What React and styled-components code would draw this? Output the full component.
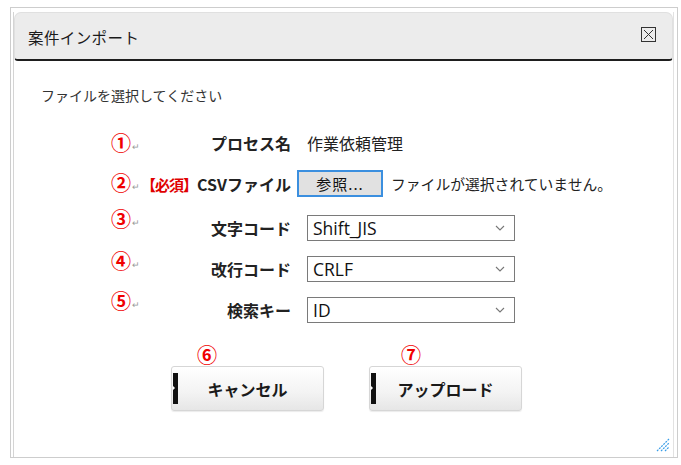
import React from "react";
import styled, { createGlobalStyle } from "styled-components";

const GlobalStyle = createGlobalStyle`
  body {
    margin: 0;
    background: #fff;
    font-family: "Noto Sans CJK JP", "Noto Sans", sans-serif;
    color: #222;
  }
`;

const Frame = styled.div`
  box-sizing: border-box;
  width: 668px;
  height: 451px;
  margin: 7px 0 0 10px;
  border: 1px solid #cdcdcd;
  padding: 4px 3px 0 2px;
  display: flex;
`;

const Panel = styled.div`
  position: relative;
  flex: 1;
  display: flex;
  flex-direction: column;
  border-left: 1px solid #d4d4d4;
  border-right: 1px solid #e2e2e2;
`;

const TitleBar = styled.div`
  height: 49px;
  display: flex;
  align-items: center;
  justify-content: space-between;
  padding: 2px 16px 0 13px;
  box-sizing: border-box;
  background: #ececec;
  border: 1px solid #e0e0e0;
  border-bottom: 2px solid #1e1e1e;
  border-radius: 7px 7px 4px 4px;
`;

const Title = styled.div`
  font-size: 15.5px;
  letter-spacing: 0.4px;
  color: #1a1a1a;
`;

const CloseBox = styled.div`
  width: 13px;
  height: 13px;
  border: 1px solid #333;
  display: flex;
  align-items: center;
  justify-content: center;
  margin-top: -6px;
`;

const Body = styled.div`
  flex: 1;
  padding: 24px 0 0 27px;
`;

const Intro = styled.div`
  font-size: 14px;
  line-height: 20px;
  color: #333;
`;

const Form = styled.div`
  display: flex;
  flex-direction: column;
  margin-left: 71px;
`;

const Row = styled.div`
  display: grid;
  grid-template-columns: 24px 171px auto;
  align-items: center;
  height: ${(p) => p.$h}px;
  margin-top: ${(p) => p.$mt}px;
`;

const Marker = styled.div`
  align-self: start;
  margin-top: ${(p) => p.$dy}px;
  margin-left: -1px;
  display: flex;
  align-items: flex-end;
  white-space: nowrap;
`;

const Circled = styled.span`
  color: #f00000;
  font-size: 20px;
  font-weight: 700;
  line-height: 20px;
`;

const Return = styled.span`
  color: #999;
  font-size: 9px;
  line-height: 12px;
  margin-left: 1px;
`;

const Label = styled.div`
  font-size: 16px;
  font-weight: 700;
  text-align: right;
  padding-right: 16px;
  white-space: nowrap;
  color: #222;
`;

const Required = styled.span`
  color: #e00000;
  font-size: 15px;
  letter-spacing: -1px;
`;

const Value = styled.div`
  display: flex;
  align-items: center;
  font-size: 16px;
  color: #222;
  white-space: nowrap;
`;

const BrowseButton = styled.div`
  box-sizing: border-box;
  width: 86px;
  height: 27px;
  margin-left: -10px;
  border: 2px solid #3b8fdf;
  background: #e1e1e1;
  display: flex;
  align-items: center;
  justify-content: center;
  font-size: 15px;
  letter-spacing: 1px;
  color: #111;
`;

const NoFile = styled.span`
  margin-left: 8px;
  font-size: 14.8px;
  color: #222;
`;

const SelectBox = styled.div`
  box-sizing: border-box;
  width: 208px;
  height: 26px;
  border: 1px solid #7a7a7a;
  background: #fff;
  display: flex;
  align-items: center;
  justify-content: space-between;
  padding: 0 9px 0 5px;
  font-family: "Open Sans", "Noto Sans", sans-serif;
  font-size: 17.5px;
  color: #111;
`;

const Actions = styled.div`
  display: flex;
  gap: 45px;
  margin: 22px 0 0 130px;
`;

const ActionSlot = styled.div`
  display: flex;
  flex-direction: column;
`;

const Note = styled.div`
  color: #f00000;
  font-size: 20px;
  font-weight: 700;
  line-height: 20px;
  padding-left: ${(p) => p.$indent}px;
`;

const ActionButton = styled.div`
  position: relative;
  box-sizing: border-box;
  width: 153px;
  height: 45px;
  margin-top: 1px;
  border: 1px solid #d6d6d6;
  border-radius: 3px;
  background: linear-gradient(#ffffff, #f3f3f3 60%, #e6e6e6);
  box-shadow: 0 1px 1px rgba(0, 0, 0, 0.08);
  display: flex;
  align-items: center;
  justify-content: center;
  font-size: 16px;
  font-weight: 700;
  color: #1a1a1a;

  &::before {
    content: "";
    position: absolute;
    left: 1px;
    top: 6px;
    bottom: 6px;
    width: 5px;
    background: #111;
  }

  &::after {
    content: "";
    position: absolute;
    left: 1px;
    top: 19px;
    border-top: 2px solid transparent;
    border-bottom: 2px solid transparent;
    border-left: 2px solid #fff;
  }
`;

const Grip = styled.svg`
  position: absolute;
  right: 3px;
  bottom: 5px;
`;

const Chevron = () => (
  <svg width="10" height="6" viewBox="0 0 10 6">
    <path d="M1 1l4 4 4-4" fill="none" stroke="#777" strokeWidth="1.1" />
  </svg>
);

const rows = [
  { n: "①", h: 20, mt: 26, dy: 2, label: "プロセス名", kind: "text", value: "作業依頼管理" },
  { n: "②", h: 27, mt: 19, dy: 3, kind: "file" },
  { n: "③", h: 26, mt: 18, dy: -6, label: "文字コード", kind: "select", value: "Shift_JIS" },
  { n: "④", h: 26, mt: 15, dy: -5, label: "改行コード", kind: "select", value: "CRLF" },
  { n: "⑤", h: 26, mt: 15, dy: -6, label: "検索キー", kind: "select", value: "ID" },
];

const renderValue = (r) => {
  if (r.kind === "file") {
    return (
      <Value>
        <BrowseButton>参照...</BrowseButton>
        <NoFile>ファイルが選択されていません。</NoFile>
      </Value>
    );
  }
  if (r.kind === "select") {
    return (
      <Value>
        <SelectBox>
          <span>{r.value}</span>
          <Chevron />
        </SelectBox>
      </Value>
    );
  }
  return <Value>{r.value}</Value>;
};

const App = () => {
  return (
    <>
      <GlobalStyle />
      <Frame>
        <Panel>
          <TitleBar>
            <Title>案件インポート</Title>
            <CloseBox>
              <svg width="11" height="11" viewBox="0 0 11 11">
                <path d="M1 1l9 9M10 1l-9 9" stroke="#333" strokeWidth="1" />
              </svg>
            </CloseBox>
          </TitleBar>
          <Body>
            <Intro>ファイルを選択してください</Intro>
            <Form>
              {rows.map((r) => (
                <Row key={r.n} $h={r.h} $mt={r.mt}>
                  <Marker $dy={r.dy}>
                    <Circled>{r.n}</Circled>
                    <Return>↵</Return>
                  </Marker>
                  <Label>
                    {r.kind === "file" ? (
                      <>
                        <Required>【必須】</Required>CSVファイル
                      </>
                    ) : (
                      r.label
                    )}
                  </Label>
                  {renderValue(r)}
                </Row>
              ))}
            </Form>
            <Actions>
              <ActionSlot>
                <Note $indent={26}>⑥</Note>
                <ActionButton>キャンセル</ActionButton>
              </ActionSlot>
              <ActionSlot>
                <Note $indent={32}>⑦</Note>
                <ActionButton>アップロード</ActionButton>
              </ActionSlot>
            </Actions>
          </Body>
          <Grip width="15" height="14" viewBox="0 0 15 14">
            <path d="M2 13L14 1M6 13L14 5M10 13L14 9" stroke="#3a9ee8" strokeWidth="1.2" strokeDasharray="2 1" />
          </Grip>
        </Panel>
      </Frame>
    </>
  );
};

export default App;
